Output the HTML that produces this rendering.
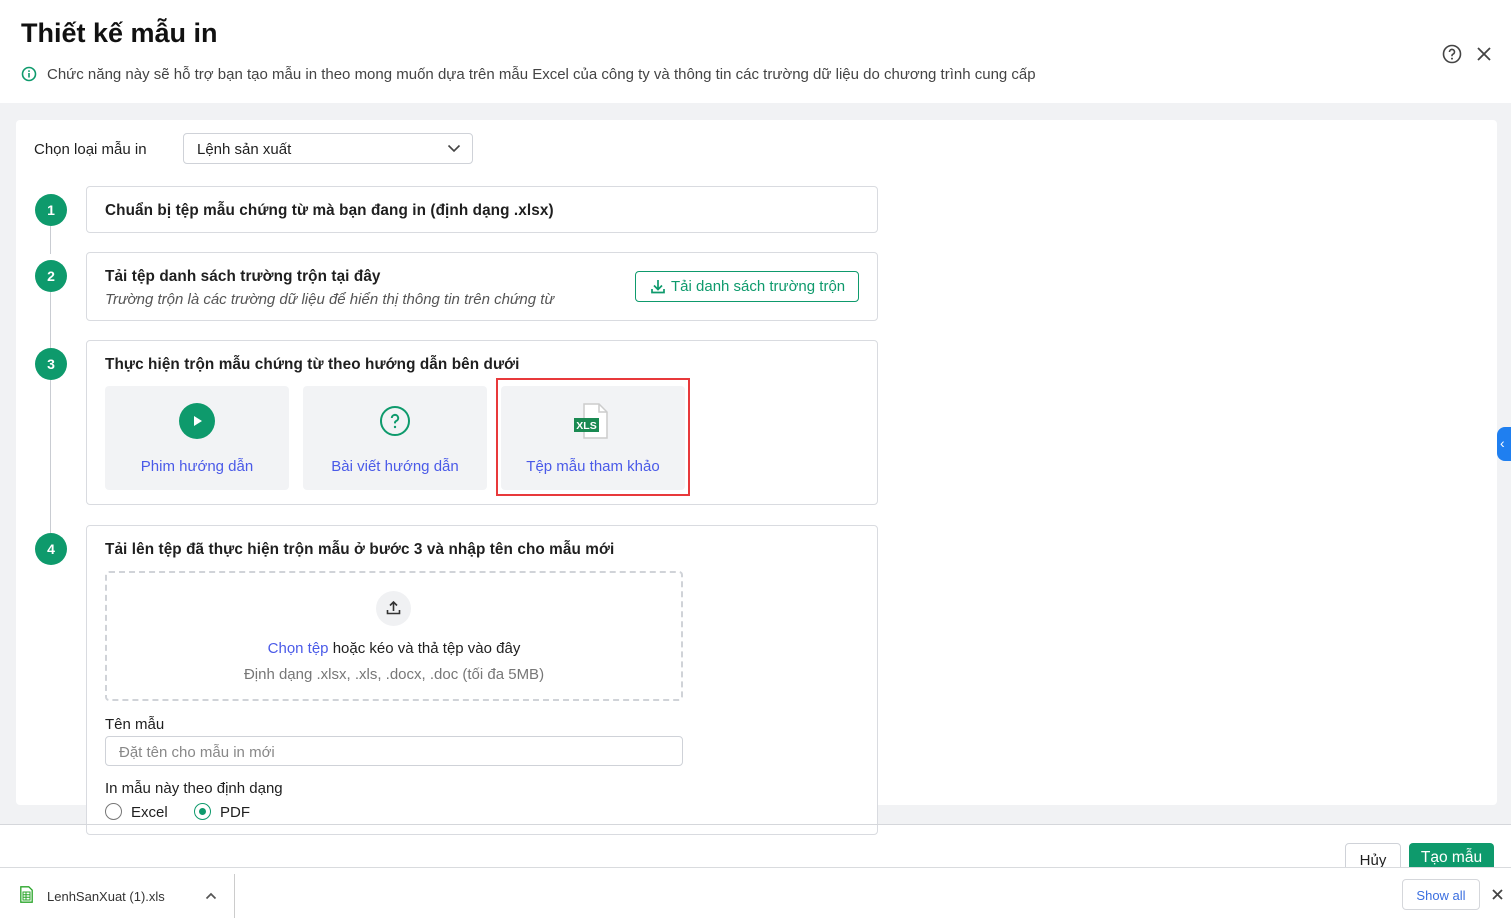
<!DOCTYPE html>
<html><head><meta charset="utf-8"><style>
*{box-sizing:border-box;margin:0;padding:0}
body{width:1511px;height:920px;position:relative;overflow:hidden;background:#fff;font-family:"Liberation Sans",sans-serif;color:#1f1f1f;font-size:15px}
.a{position:absolute}
.bg{left:0;top:103px;width:1511px;height:721px;background:#f1f2f4}
.card{left:16px;top:120px;width:1481px;height:685px;background:#fff;border-radius:4px}
.step{left:86px;width:792px;background:#fff;border:1px solid #d9dbe0;border-radius:4px}
.num{left:35px;width:32px;height:32px;border-radius:50%;background:#0e9a6c;color:#fff;font-weight:bold;font-size:14px;text-align:center;line-height:32px}
.vl{left:50px;width:1px;background:#c9ccd2}
.b{font-weight:bold;font-size:15.3px;color:#1f1f1f;letter-spacing:0.1px}
.tile{top:386px;width:184px;height:104px;background:#f2f3f5;border-radius:4px;text-align:center;color:#4a5ae8;font-size:15px}
.tile span{position:absolute;left:0;right:0;top:72px}
.blue{color:#4a5ae8}
</style></head><body>
<div class="a" style="left:21px;top:18px;font-size:27px;font-weight:bold;color:#111">Thiết kế mẫu in</div>
<svg class="a" style="left:21px;top:66px" width="16" height="16" viewBox="0 0 16 16"><circle cx="8" cy="8" r="6.5" fill="none" stroke="#0e9a6c" stroke-width="1.6"/><rect x="7.2" y="7" width="1.6" height="4.5" fill="#0e9a6c"/><rect x="7.2" y="4.3" width="1.6" height="1.6" fill="#0e9a6c"/></svg>
<div class="a" style="left:47px;top:66px;font-size:15px;color:#444">Chức năng này sẽ hỗ trợ bạn tạo mẫu in theo mong muốn dựa trên mẫu Excel của công ty và thông tin các trường dữ liệu do chương trình cung cấp</div>
<svg class="a" style="left:1442px;top:44px" width="20" height="20" viewBox="0 0 20 20"><circle cx="10" cy="10" r="8.5" fill="none" stroke="#444" stroke-width="1.6"/><path d="M7.5 8a2.5 2.5 0 1 1 3.5 2.2c-.7.3-1 .8-1 1.5v.5" fill="none" stroke="#444" stroke-width="1.6"/><circle cx="10" cy="14.6" r="1" fill="#444"/></svg>
<svg class="a" style="left:1476px;top:46px" width="16" height="16" viewBox="0 0 16 16"><path d="M2 2L14 14M14 2L2 14" stroke="#444" stroke-width="1.8"/></svg>

<div class="a bg"></div>
<div class="a card"></div>
<div class="a" style="left:34px;top:141px">Chọn loại mẫu in</div>
<div class="a" style="left:183px;top:133px;width:290px;height:31px;border:1px solid #cfd2d8;border-radius:4px;padding:7px 13px">Lệnh sản xuất</div>
<svg class="a" style="left:447px;top:143px" width="14" height="10" viewBox="0 0 14 10"><path d="M1.5 2.5L7 8l5.5-5.5" fill="none" stroke="#444" stroke-width="1.6"/></svg>

<div class="a vl" style="top:226px;height:28px"></div>
<div class="a vl" style="top:292px;height:56px"></div>
<div class="a vl" style="top:380px;height:153px"></div>
<div class="a num" style="top:194px">1</div>
<div class="a num" style="top:260px">2</div>
<div class="a num" style="top:348px">3</div>
<div class="a num" style="top:533px">4</div>

<div class="a step" style="top:186px;height:47px"><div class="a b" style="left:18px;top:15px">Chuẩn bị tệp mẫu chứng từ mà bạn đang in (định dạng .xlsx)</div></div>
<div class="a step" style="top:252px;height:69px"><div class="a b" style="left:18px;top:15px">Tải tệp danh sách trường trộn tại đây</div><div class="a" style="left:18px;top:38px;font-style:italic;color:#555;font-size:15px">Trường trộn là các trường dữ liệu để hiển thị thông tin trên chứng từ</div>
<div class="a" style="left:548px;top:18px;width:224px;height:31px;border:1.5px solid #0e9a6c;border-radius:4px;color:#0e9a6c;padding:6px 0 0 35px;font-size:15px">Tải danh sách trường trộn</div>
<svg class="a" style="left:564px;top:26px" width="14" height="15" viewBox="0 0 14 15"><path d="M7 1v9M3 6.5L7 10.5 11 6.5M1 10v3.5h12V10" fill="none" stroke="#0e9a6c" stroke-width="1.7"/></svg></div>
<div class="a step" style="top:340px;height:165px"><div class="a b" style="left:18px;top:15px">Thực hiện trộn mẫu chứng từ theo hướng dẫn bên dưới</div></div>
<div class="a tile" style="left:105px"><svg class="a" style="left:74px;top:17px" width="36" height="36" viewBox="0 0 36 36"><circle cx="18" cy="18" r="18" fill="#0e9a6c"/><path d="M15 13v10l8-5z" fill="#fff"/></svg><span>Phim hướng dẫn</span></div>
<div class="a tile" style="left:303px"><svg class="a" style="left:76px;top:19px" width="32" height="32" viewBox="0 0 32 32"><circle cx="16" cy="16" r="14" fill="none" stroke="#0e9a6c" stroke-width="2"/><path d="M12.8 13a3.2 3.2 0 1 1 4.4 3c-.8.4-1.2 1-1.2 1.8v.6" fill="none" stroke="#0e9a6c" stroke-width="2"/><circle cx="16" cy="22" r="1.2" fill="#0e9a6c"/></svg><span>Bài viết hướng dẫn</span></div>
<div class="a" style="left:496px;top:378px;width:194px;height:118px;border:2px solid #e8393b"></div>
<div class="a tile" style="left:501px"><svg class="a" style="left:72px;top:17px" width="40" height="38" viewBox="0 0 40 38"><path d="M11 1h15l8 8v26H11z" fill="#fff" stroke="#ccc" stroke-width="1.5"/><path d="M26 1v8h8" fill="none" stroke="#ccc" stroke-width="1.5"/><rect x="1" y="15" width="25" height="14" fill="#1a8a52"/><text x="13.5" y="26" font-size="10.5" font-weight="bold" fill="#fff" text-anchor="middle" font-family="Liberation Sans">XLS</text></svg><span>Tệp mẫu tham khảo</span></div>

<div class="a step" style="top:525px;height:310px"><div class="a b" style="left:18px;top:15px">Tải lên tệp đã thực hiện trộn mẫu ở bước 3 và nhập tên cho mẫu mới</div></div>
<div class="a" style="left:105px;top:571px;width:578px;height:130px;border:2px dashed #d0d3d8;border-radius:4px"></div>
<div class="a" style="left:376px;top:591px;width:35px;height:35px;border-radius:50%;background:#f0f1f3"></div>
<svg class="a" style="left:386px;top:600px" width="15" height="15" viewBox="0 0 15 15"><path d="M7.5 11V2M4 5.5L7.5 2 11 5.5M1.5 10v3.5h12V10" fill="none" stroke="#333" stroke-width="1.6"/></svg>
<div class="a" style="left:105px;top:640px;width:578px;text-align:center;font-size:15px"><span class="blue">Chọn tệp</span> hoặc kéo và thả tệp vào đây</div>
<div class="a" style="left:105px;top:666px;width:578px;text-align:center;font-size:15px;color:#777">Định dạng .xlsx, .xls, .docx, .doc (tối đa 5MB)</div>
<div class="a" style="left:105px;top:716px">Tên mẫu</div>
<div class="a" style="left:105px;top:736px;width:578px;height:30px;border:1px solid #cfd2d8;border-radius:4px;padding:7px 13px;color:#888;font-size:15px">Đặt tên cho mẫu in mới</div>
<div class="a" style="left:105px;top:780px">In mẫu này theo định dạng</div>
<div class="a" style="left:105px;top:803px;width:17px;height:17px;border:1.5px solid #777;border-radius:50%"></div>
<div class="a" style="left:131px;top:804px">Excel</div>
<div class="a" style="left:194px;top:803px;width:17px;height:17px;border:1.5px solid #0e9a6c;border-radius:50%"><div style="margin:3.5px;width:7px;height:7px;border-radius:50%;background:#0e9a6c"></div></div>
<div class="a" style="left:220px;top:804px">PDF</div>
<div class="a" style="left:0;top:824px;width:1511px;height:1px;background:#d5d7db"></div>
<div class="a" style="left:1497px;top:427px;width:14px;height:34px;background:#1f7ff0;border-radius:8px 0 0 8px;color:#fff;font-size:14px;padding:8px 0 0 3px">‹</div>

<div class="a" style="left:1345px;top:843px;width:56px;height:30px;border:1px solid #cfd2d8;border-radius:4px;text-align:center;padding-top:8px">Hủy</div>
<div class="a" style="left:1409px;top:843px;width:85px;height:30px;background:#0e9a6c;border-radius:4px;color:#fff;text-align:center;padding-top:6px;font-size:15.5px">Tạo mẫu</div>

<div class="a" style="left:0;top:867px;width:1511px;height:53px;background:#fff;border-top:1px solid #d9dbde"></div>
<svg class="a" style="left:20px;top:886px" width="13" height="17" viewBox="0 0 13 17"><path d="M.8.8h8l3.4 3.4v12H.8z" fill="#fff" stroke="#2aa52a" stroke-width="1.3"/><path d="M3 6h7v8H3zM3 8.7h7M3 11.3h7M6 6v8" fill="none" stroke="#2aa52a" stroke-width="1"/></svg>
<div class="a" style="left:47px;top:889px;font-size:13px;color:#333">LenhSanXuat (1).xls</div>
<svg class="a" style="left:205px;top:892px" width="12" height="8" viewBox="0 0 12 8"><path d="M1.5 6.5L6 2l4.5 4.5" fill="none" stroke="#555" stroke-width="1.7"/></svg>
<div class="a" style="left:234px;top:874px;width:1px;height:44px;background:#ccc"></div>
<div class="a" style="left:1402px;top:879px;width:78px;height:31px;border:1px solid #d5d7db;border-radius:4px;color:#3b6fe0;font-size:13px;text-align:center;padding-top:8px">Show all</div>
<svg class="a" style="left:1492px;top:889px" width="11" height="11" viewBox="0 0 11 11"><path d="M1 1l9 9M10 1l-9 9" stroke="#444" stroke-width="1.8"/></svg>
</body></html>
